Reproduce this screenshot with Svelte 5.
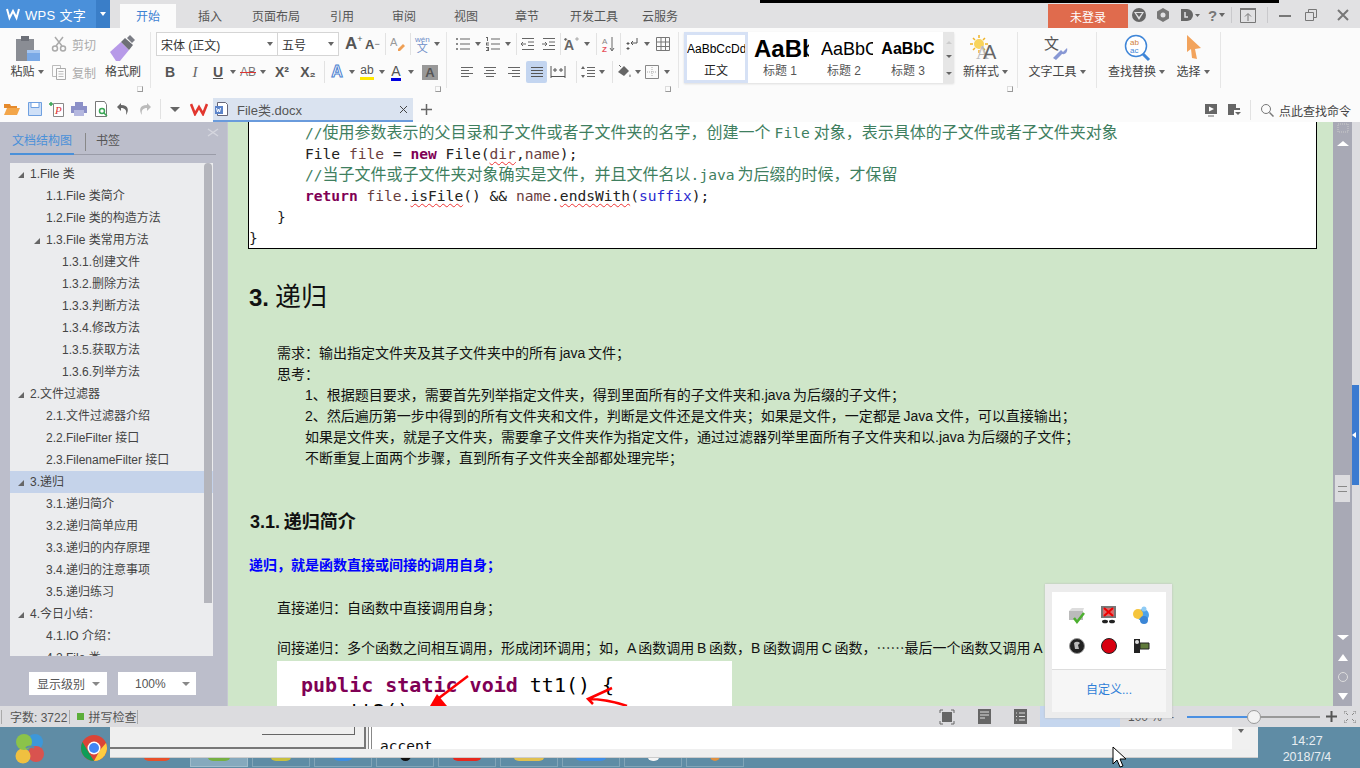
<script>
const tabs = [["开始",56],["插入",68],["页面布局",64],["引用",68],["审阅",56],["视图",68],["章节",54],["开发工具",80],["云服务",52]];
const ic = {
 list:'<g fill="#666"><circle cx="2" cy="3" r="1"/><circle cx="2" cy="8" r="1"/><circle cx="2" cy="13" r="1"/><path d="M5 2.500h10v1H5zM5 7.500h10v1H5zM5 12.500h10v1H5z"/></g>',
 num:'<g fill="#666"><path d="M1 1h2v4H2V2H1zM1 6.500h3v1H2v1h2v1H1zM1 11h3v4H1v-1h2v-.5H2v-1h1V12H1z" /><path d="M6 2.500h9v1H6zM6 7.500h9v1H6zM6 12.500h9v1H6z"/></g>',
 ind1:'<path d="M2 2.500h12M8 6h6M8 9.500h6M2 13.500h12M6 8H1M3 6 1 8l2 2" fill="none" stroke="#666"/>',
 ind2:'<path d="M2 2.500h12M8 6h6M8 9.500h6M2 13.500h12M1 8h5M4 6l2 2-2 2" fill="none" stroke="#666"/>',
 az:'<text x="3" y="7.500" font-size="8" fill="#888" font-family="Liberation Sans">A</text><text x="3" y="15.500" font-size="8" fill="#e8505b" font-weight="700" font-family="Liberation Sans">Z</text><path d="M13 1v13M11 12l2 3 2-3" fill="none" stroke="#666"/>',
 ret:'<path d="M12 2v5H6M8 5 6 7l2 2" fill="none" stroke="#555"/><path d="M3 6v3M1.500 7.500h3M3 11v3M1.500 12.500h3" stroke="#555"/>',
 table:'<path d="M1.500 1.500h13v13h-13zM1.500 6h13M1.500 10.500h13M6 1.500v13M10.500 1.500v13" fill="none" stroke="#777"/>',
 left:'<path d="M2 3.500h12M2 6.500h8M2 9.500h12M2 12.500h8" stroke="#666"/>',
 center:'<path d="M2 3.500h12M4 6.500h8M2 9.500h12M4 12.500h8" stroke="#666"/>',
 right:'<path d="M2 3.500h12M6 6.500h8M2 9.500h12M6 12.500h8" stroke="#666"/>',
 just:'<path d="M2 3.500h12M2 6.500h12M2 9.500h12M2 12.500h12" stroke="#555"/>',
 dist:'<path d="M1 2v12M15 2v12M1 12.500h14M3 6h4M9 6h4M5 4v4M11 4v4" stroke="#555" fill="none"/>',
 lh:'<path d="M7 3.500h8M7 6.500h8M7 9.500h8M7 12.500h8" stroke="#666"/><path d="M3 2 1 5h4zM3 14 1 11h4z" fill="#666"/>',
 fill:'<path d="M2 8 8 2l5 5-5 5z" fill="#666"/><path d="M5 3 3 1" stroke="#666"/><path d="M14 10c1 2 1 3 0 3s-1-1 0-3z" fill="#777"/>',
 border:'<path d="M1.500 1.500h13v13h-13z" fill="none" stroke="#888"/><path d="M8 3v10M3 8h10" stroke="#aaa" stroke-dasharray="1 1"/>',
 aplus:'<text x="0" y="14" font-size="14" fill="#666" font-weight="700" font-family="Liberation Sans">A</text><path d="M11 3h4M13 1v4M1 3l.6-1 .6 1 1 .4-1 .4-.6 1-.6-1-1-.4z" stroke="#666" fill="#666" stroke-width=".5"/>'
};
const fontRow = [{t:"B",w:24,c:"bb"},{t:"I",w:26,c:"ii"},{t:"U",w:20,c:"uu"},{k:"c",w:10},{t:"AB",w:20,c:"ab"},{k:"c",w:10},{t:"X²",w:28,c:"xx"},{t:"X₂",w:24,c:"xx"},{k:"s",w:8},{t:"A",w:18,c:"ao"},{k:"c",w:12},{t:"ab",w:18,c:"hi"},{k:"c",w:12},{t:"A",w:16,c:"fc"},{k:"c",w:14},{t:"A",w:24,c:"fb"}];
const para1 = [{i:"list",w:16},{k:"c",w:14},{i:"num",w:16},{k:"c",w:14},{k:"s",w:2},{i:"ind1",w:22},{i:"ind2",w:20},{k:"s",w:2},{i:"aplus",w:21},{k:"c",w:10},{k:"s",w:8},{i:"az",w:14},{k:"s",w:12},{i:"ret",w:14},{k:"c",w:14},{i:"table",w:18}];
const para2 = [{i:"left",w:23},{i:"center",w:24},{i:"right",w:24},{i:"just",w:21,on:true},{i:"dist",w:22},{k:"s",w:14},{i:"lh",w:10},{k:"c",w:18},{k:"s",w:2},{i:"fill",w:22},{k:"c",w:5},{i:"border",w:24},{k:"c",w:6}];
const tree = [
 [1,"1.File 类",1],[2,"1.1.File 类简介"],[2,"1.2.File 类的构造方法"],[2,"1.3.File 类常用方法",1],
 [3,"1.3.1.创建文件"],[3,"1.3.2.删除方法"],[3,"1.3.3.判断方法"],[3,"1.3.4.修改方法"],[3,"1.3.5.获取方法"],[3,"1.3.6.列举方法"],
 [1,"2.文件过滤器",1],[2,"2.1.文件过滤器介绍"],[2,"2.2.FileFilter 接口"],[2,"2.3.FilenameFilter 接口"],
 [1,"3.递归",1,1],[2,"3.1.递归简介"],[2,"3.2.递归简单应用"],[2,"3.3.递归的内存原理"],[2,"3.4.递归的注意事项"],[2,"3.5.递归练习"],
 [1,"4.今日小结：",1],[2,"4.1.IO 介绍："],[2,"4.2.File 类"]
];
const taskTiles = [["#e8502a",28,0],["#76b043",24,1],["#c8c040",22,0],["#3f8ee0",20,0],["#111",11,0],["#e6281e",30,0],["#e0c050",32,0],["#3f8ee6",32,0],["#f4f4f4",13,0],["#e09040",10,0]];
</script>

<div class="page">
 <header class="title">
  <div class="logo">
   <svg width="14" height="14" viewBox="0 0 14 14"><path d="M1 2l2.500 9L7 4l3.500 7L13 2" fill="none" stroke="#fff" stroke-width="2"/></svg>
   <span class="wps">WPS 文字</span>
   <span class="logocaret"><i class="caret white"></i></span>
  </div>
  <div class="spacer10"></div>
  <nav class="tabs">
   {#each tabs as t, n}<span class="tab" class:active={n===0} style="width:{t[1]}px">{t[0]}</span>{/each}
  </nav>
  <div class="blackline"></div>
  <button class="login">未登录</button>
  <div class="winbtns">
   <svg width="16" height="16" viewBox="0 0 16 16"><circle cx="8" cy="8" r="7" fill="#666"/><path d="M3 5h10L8 13z" fill="#e1e1e3"/><path d="M5 6h6L8 10z" fill="#666"/></svg>
   <svg class="m8" width="16" height="16" viewBox="0 0 16 16"><path d="M8 1l6 3.500v7L8 15l-6-3.500v-7z" fill="#777"/><circle cx="8" cy="8" r="2.500" fill="#e1e1e3"/></svg>
   <svg class="m8" width="22" height="16" viewBox="0 0 22 16"><path d="M2 2h6a6 6 0 0 1 0 12H2z" fill="#666"/><path d="M6 5v5h3" stroke="#e1e1e3" stroke-width="1.500" fill="none"/><path d="M16 7h5l-2.500 3z" fill="#666"/></svg>
   <span class="q">?</span><i class="caret"></i>
   <i class="tsep s1"></i>
   <svg class="m8" width="16" height="16" viewBox="0 0 16 16"><path d="M.5 2.500h15v13H.5z" fill="none" stroke="#777"/><path d="M0 1h16v2H0z" fill="#777"/><path d="M8 14V7M5 9.500 8 6.500l3 3" fill="none" stroke="#777"/></svg>
   <i class="tsep s2"></i>
   <svg class="m10" width="14" height="14" viewBox="0 0 14 14"><path d="M1 8h12" stroke="#777" stroke-width="2"/></svg>
   <svg class="m12" width="14" height="14" viewBox="0 0 14 14"><path d="M1.500 4.500h8v8h-8zM4.500 4V1.500h8v8H10" fill="none" stroke="#777"/></svg>
   <svg class="m18" width="14" height="14" viewBox="0 0 14 14"><path d="M2 2l10 10M12 2 2 12" stroke="#777" stroke-width="2"/></svg>
  </div>
 </header>

 <section class="ribbon">
  <div class="g g1">
   <div class="big paste">
    <svg width="28" height="28" viewBox="0 0 28 28"><path d="M3 5h18v22H3z" fill="#8a8d94"/><path d="M8 2h8v5H8z" fill="#6d7078"/><path d="M14 16h13v11H14z" fill="#7aa9e6"/><path d="M14 16h13v3H14z" fill="#a5c5ef"/></svg>
    <span class="lab">粘贴<i class="caret"></i></span>
   </div>
   <div class="mid">
    <div class="mi dim"><svg width="16" height="16" viewBox="0 0 16 16"><path d="M4 1l7 9M12 1 5 10" stroke="#aaa" stroke-width="1.500"/><circle cx="4" cy="12.500" r="2.500" fill="none" stroke="#aaa" stroke-width="1.500"/><circle cx="12" cy="12.500" r="2.500" fill="none" stroke="#aaa" stroke-width="1.500"/></svg>剪切</div>
    <div class="mi dim"><svg width="16" height="16" viewBox="0 0 16 16"><path d="M1.500 1.500h8v11h-8z" fill="none" stroke="#bbb"/><path d="M5.500 4.500h9v11h-9z" fill="#fbfbfb" stroke="#aaa"/><path d="M7.500 7.500h5M7.500 10h5M7.500 12.500h5" stroke="#bbb"/></svg>复制</div>
   </div>
   <div class="big brush">
    <svg width="28" height="28" viewBox="0 0 28 28"><path d="M1 18 12 8l8 8-9 11H7z" fill="#b79ae8"/><path d="M12 8l4-4 8 7-4 5z" fill="#6d6f76"/><path d="M18 4l3-3 5 5-3 3z" fill="#7b7d85"/></svg>
    <span class="lab">格式刷</span>
   </div>
   <i class="launch l1"></i>
  </div>
  <i class="rsep"></i>
  <div class="g g2">
   <div class="r r1">
    <div class="sel font"><span>宋体 (正文)</span><i class="caret"></i></div>
    <div class="sel size"><span>五号</span><i class="caret"></i></div>
    <span class="fa big1">A<sup>+</sup></span>
    <span class="fa small1">A<sup>−</sup></span>
    <i class="vs"></i>
    <svg class="clear" width="16" height="16" viewBox="0 0 16 16"><text x="0" y="10" font-size="11" fill="#999" font-family="Liberation Sans">A</text><path d="M8 13l5-5 2 2-5 5H8z" fill="#ef9f55"/></svg>
    <i class="vs"></i>
    <span class="wen"><small>wén</small><b>文</b></span><i class="caret"></i>
   </div>
   <div class="r tools">
    {#each fontRow as t}
     <span class="tc" style="width:{t.w}px">
      {#if t.k==="c"}<i class="caret"></i>{:else if t.k==="s"}<i class="vs"></i>{:else}<span class={t.c}>{t.t}</span>{/if}
     </span>
    {/each}
   </div>
   <i class="launch l2"></i>
  </div>
  <i class="rsep"></i>
  <div class="g g3">
   {#each [para1,para2] as row}
   <div class="r tools">
    {#each row as t}
     <span class="tc" class:on={t.on} style="width:{t.w}px">
      {#if t.k==="c"}<i class="caret"></i>{:else if t.k==="s"}<i class="vs"></i>{:else}<svg class="ti" width="16" height="16" viewBox="0 0 16 16">{@html ic[t.i]}</svg>{/if}
     </span>
    {/each}
   </div>
   {/each}
   <i class="launch l3"></i>
  </div>
  <i class="rsep"></i>
  <div class="gallery">
   <div class="st first"><span class="s0">AaBbCcDd</span><em class="k">正文</em></div>
   <div class="st"><span class="s1">AaBb</span><em>标题 1</em></div>
   <div class="st"><span class="s2">AaBbC</span><em>标题 2</em></div>
   <div class="st"><span class="s3">AaBbC</span><em>标题 3</em></div>
   <div class="gscroll"><i class="up"></i><i class="dn"></i><i class="dn2"></i></div>
  </div>
  <div class="big b-new">
   <svg width="34" height="26" viewBox="0 0 34 26"><circle cx="10" cy="9" r="5" fill="#f8d45c"/><path d="M10 0v3M10 15v3M1 9h3M16 9h3M4 3l2 2M14 13l2 2M4 15l2-2M14 5l2-2" stroke="#f0b429" stroke-width="1.500"/><text x="7" y="24" font-size="18" fill="#bbb" font-family="Liberation Serif">A</text><text x="14" y="24" font-size="20" fill="#666" font-family="Liberation Sans">A</text></svg>
   <span class="lab">新样式<i class="caret"></i></span>
   <i class="launch l4"></i>
  </div>
  <i class="rsep"></i>
  <div class="big b-tool">
   <svg width="28" height="28" viewBox="0 0 28 28"><text x="1" y="15" font-size="15" fill="#555" font-family="Noto Sans CJK SC">文</text><path d="M10 24l8-8 2 2 4-4c1 3-1 7-5 6l-6 6z" fill="#8898d4"/></svg>
   <span class="lab">文字工具<i class="caret"></i></span>
  </div>
  <i class="rsep"></i>
  <div class="big b-find">
   <svg width="28" height="28" viewBox="0 0 28 28"><circle cx="13" cy="12" r="10.500" fill="#fff" stroke="#3f86d8" stroke-width="1.500"/><path d="M20 20l6 6" stroke="#3f86d8" stroke-width="3"/><text x="7" y="11" font-size="8" fill="#d2813a" font-family="Liberation Sans">ab</text><text x="7" y="19" font-size="8" fill="#3f86d8" font-family="Liberation Sans">ac</text></svg>
   <span class="lab">查找替换<i class="caret"></i></span>
  </div>
  <div class="big b-sel">
   <svg width="28" height="28" viewBox="0 0 28 28"><path d="M8 1l14 13-6 1 2 10-5-1-1-9-4 3z" fill="#f2a35c"/></svg>
   <span class="lab">选择<i class="caret"></i></span>
  </div>
  <i class="rsep"></i>
 </section>

 <section class="quick">
  <svg width="18" height="16" viewBox="0 0 18 16"><path d="M1 3h6l1 2h6v2H1z" fill="#e58a2c"/><path d="M1 14 4 7h13l-3 7z" fill="#f3a64a"/></svg>
  <svg width="16" height="16" viewBox="0 0 16 16"><path d="M1.500 1.500h13v13h-13z" fill="#cfe0f7" stroke="#6fa0e0"/><path d="M4 1.500h8v5H4z" fill="#fff" stroke="#6fa0e0"/></svg>
  <svg width="16" height="16" viewBox="0 0 16 16"><path d="M4.500 2.500h10v13h-10z" fill="#fff" stroke="#888"/><path d="M0 3h4M2 1v4" stroke="#3aa655" stroke-width="1.500"/><text x="6" y="13" font-size="11" fill="#d33" font-style="italic" font-family="Liberation Serif">P</text></svg>
  <svg width="16" height="16" viewBox="0 0 16 16"><path d="M4 1h8v4H4zM0 5h16v7H0z" fill="#8c90c8"/><path d="M3 9h10v6H3z" fill="#b5b8df"/></svg>
  <svg width="16" height="16" viewBox="0 0 16 16"><path d="M2.500.5h9l2 3v12h-11z" fill="#fff" stroke="#777"/><circle cx="9" cy="10" r="2.500" fill="none" stroke="#3aa655" stroke-width="1.500"/><path d="M11 12l3 3" stroke="#3aa655" stroke-width="1.500"/></svg>
  <svg width="16" height="16" viewBox="0 0 16 16"><path d="M6 2 2 6l4 4V7c4 0 6 2 5 7 3-4 3-10-5-10z" fill="#666"/></svg>
  <svg width="16" height="16" viewBox="0 0 16 16"><path d="M10 2l4 4-4 4V7C6 7 4 9 5 14 2 10 2 4 10 4z" fill="#bbb"/></svg>
  <i class="vs tall"></i>
  <i class="caret wide"></i>
  <svg class="wlogo" width="18" height="14" viewBox="0 0 18 14"><path d="M1 2l4 10 4-7 4 7 4-10" fill="none" stroke="#e2372f" stroke-width="2.600"/></svg>
  <div class="doctab">
   <svg width="16" height="16" viewBox="0 0 16 16"><path d="M3.500 1.500h8l2 2v11h-10z" fill="#fff" stroke="#667"/><path d="M1 5h8v8H1z" fill="#5b83c9"/><path d="M2.500 7l1 4 1-3 1 3 1-4" stroke="#fff" fill="none"/></svg>
   <span class="dn">File类.docx</span>
   <svg class="x" width="9" height="9" viewBox="0 0 9 9"><path d="M1 1l7 7M8 1 1 8" stroke="#444"/></svg>
  </div>
  <svg class="plus" width="13" height="13" viewBox="0 0 13 13"><path d="M6.500 1v11M1 6.500h11" stroke="#666" stroke-width="1.500"/></svg>
  <div class="qright">
   <svg width="14" height="14" viewBox="0 0 14 14"><path d="M1 1h12v10H1z" fill="#666"/><path d="M5 3.500 10 6 5 8.500z" fill="#fff"/><path d="M4 13h6" stroke="#666"/></svg>
   <svg width="14" height="14" viewBox="0 0 14 14"><path d="M1 1h8v4h4v2H7v5H1z" fill="#666"/><path d="M8 9h6l-3 3z" fill="#666"/></svg>
   <i class="vs tall"></i>
   <svg width="14" height="14" viewBox="0 0 14 14"><circle cx="6" cy="6" r="4.500" fill="none" stroke="#777"/><path d="M9.500 9.500l4 4" stroke="#777" stroke-width="1.500"/></svg>
   <span class="cmd">点此查找命令</span>
  </div>
 </section>

 <main class="main">
  <aside class="side">
   <div class="sidetabs">
    <span class="st-on">文档结构图</span><i class="stsep"></i><span class="st-off">书签</span>
    <svg class="sx" width="12" height="9" viewBox="0 0 12 9"><path d="M1 1l10 7M11 1 1 8" stroke="#d5d6de" stroke-width="1.500"/></svg>
   </div>
   <div class="tree">
    <div class="rows">
    {#each tree as t}
     <div class="row lv{t[0]}" class:sel-row={t[3]}>
      {#if t[2]}<i class="tri"></i>{/if}<span>{t[1]}</span>
     </div>
    {/each}
    </div>
    <i class="tscroll"></i>
   </div>
   <div class="sidesel">
    <div class="ss a"><span>显示级别</span><i class="caret big-c"></i></div>
    <div class="ss b"><span>100%</span><i class="caret big-c"></i></div>
   </div>
  </aside>
  <article class="doc">
   <div class="code">
    <div class="cl i2"><span class="cm">//<span class="z">使用参数表示的父目录和子文件或者子文件夹的名字，创建一个</span><span class="gap">File</span><span class="z">对象，表示具体的子文件或者子文件夹对象</span></span></div>
    <div class="cl i2">File <span class="v">file</span> = <b class="kw">new</b> File(<span class="v wv">dir</span>,<span class="v">name</span>);</div>
    <div class="cl i2"><span class="cm">//<span class="z">当子文件或子文件夹对象确实是文件，并且文件名以</span>.java<span class="z after">为后缀的时候，才保留</span></span></div>
    <div class="cl i2"><b class="kw">return</b> <span class="v">file</span>.<span class="wv">isFile</span>() &amp;&amp; <span class="v">name</span>.<span class="wv">endsWith</span>(<span class="p">suffix</span>);</div>
    <div class="cl i1">&#125;</div>
    <div class="cl">&#125;</div>
   </div>
   <h1><b>3.</b> 递归</h1>
   <div class="paras">
    <p>需求：输出指定文件夹及其子文件夹中的所有 java 文件；</p>
    <p>思考：</p>
    <p class="in">1、根据题目要求，需要首先列举指定文件夹，得到里面所有的子文件夹和.java 为后缀的子文件；</p>
    <p class="in">2、然后遍历第一步中得到的所有文件夹和文件，判断是文件还是文件夹；如果是文件，一定都是 Java 文件，可以直接输出；</p>
    <p class="in">如果是文件夹，就是子文件夹，需要拿子文件夹作为指定文件，通过过滤器列举里面所有子文件夹和以.java 为后缀的子文件；</p>
    <p class="in">不断重复上面两个步骤，直到所有子文件夹全部都处理完毕；</p>
   </div>
   <h2>3.1. 递归简介</h2>
   <p class="blue">递归，就是函数直接或间接的调用自身；</p>
   <p class="plain m1">直接递归：自函数中直接调用自身；</p>
   <p class="plain m2">间接递归：多个函数之间相互调用，形成闭环调用；如，A 函数调用 B 函数，B 函数调用 C 函数，⋯⋯最后一个函数又调用 A</p>
   <div class="shot">
    <div class="sl"><b class="pk">public static</b> <b class="pk">void</b> tt1() &#123;</div>
    <div class="sl s2l">tt2();</div>
    <svg class="arrows" width="455" height="45" viewBox="0 0 455 45"><path d="M191 15 162 37" stroke="#f00" stroke-width="2.500" fill="none"/><path d="M153 45 160 33 170 45z" fill="#f00"/><path d="M335 27 311 38 316 43M311 38Q330 38 350 45" stroke="#f00" stroke-width="2.500" fill="none"/></svg>
   </div>
  </article>
  <div class="vscroll">
   <svg class="vs0" width="12" height="10" viewBox="0 0 12 10"><path d="M1 1h10v8H1z" fill="none" stroke="#ccc" stroke-dasharray="1 1"/></svg>
   <i class="tu"></i>
   <div class="vthumbwrap"><div class="vthumb"><i></i><i></i></div></div>
   <i class="td"></i>
   <i class="tu dbl"></i>
   <i class="ring"></i>
   <i class="td dbl"></i>
  </div>
  <div class="vstrip"><div class="vblue"><i></i></div></div>
 </main>

 <footer class="status">
  <i class="bar"></i><span class="count">字数: 3722</span><i class="bar"></i>
  <i class="gsq"></i><span>拼写检查</span><i class="bar"></i>
  <div class="sright">
   <svg width="16" height="16" viewBox="0 0 16 16"><path d="M3 3h10v10H3z" fill="#666"/><path d="M1 4V1h3M12 1h3v3M15 12v3h-3M4 15H1v-3" fill="none" stroke="#666"/></svg>
   <svg width="13" height="15" viewBox="0 0 13 15"><path d="M0 0h13v15H0z" fill="#666"/><path d="M2 3h9M2 6h9M2 9h5" stroke="#ddd"/></svg>
   <svg width="13" height="15" viewBox="0 0 13 15"><path d="M0 0h13v15H0z" fill="#666"/><path d="M2 4h1M5 4h6M2 7.500h1M5 7.500h6M2 11h1M5 11h6" stroke="#ddd"/></svg>
   <div class="hl"></div>
   <span class="zoomtxt">100 %</span>
   <i class="zm">-</i>
   <div class="slider"><i class="fillb"></i><i class="knob"></i></div>
   <svg width="11" height="11" viewBox="0 0 11 11"><path d="M5.500 0v11M0 5.500h11" stroke="#555" stroke-width="2"/></svg>
   <svg width="12" height="12" viewBox="0 0 12 12"><path d="M0 3V0h3M9 0h3v3M12 9v3H9M3 12H0V9M2 2l2 2M10 2 8 4M10 10 8 8M2 10l2-2" fill="none" stroke="#888"/></svg>
  </div>
 </footer>

 <footer class="task">
  <svg class="startlogo" width="32" height="32" viewBox="0 0 32 32"><circle cx="21" cy="10" r="8" fill="#3d97d9"/><circle cx="22" cy="22" r="8" fill="#d9534f"/><circle cx="9" cy="24" r="7.500" fill="#f0c040"/><circle cx="10" cy="10" r="8" fill="#8bc34a"/><path d="M12 16c2-2 6-2 8 0" stroke="#5f8ca5" stroke-width="2" fill="none"/></svg>
  <svg class="chrome" width="26" height="26" viewBox="0 0 26 26"><circle cx="13" cy="13" r="13" fill="#db4437"/><path d="M13 26A13 13 0 0 1 1.500 7L8 18z" fill="#0f9d58"/><path d="M13 26 19 15 25 8a13 13 0 0 1-12 18z" fill="#ffcd40"/><circle cx="13" cy="13" r="6.500" fill="#fff"/><circle cx="13" cy="13" r="5" fill="#4285f4"/></svg>
  <div class="peek">
   {#each taskTiles as t}
    <div class="tile" class:lit={t[2]}><i style="background:{t[0]};width:{t[1]}px"></i></div>
   {/each}
  </div>
  <div class="clock"><span>14:27</span><span>2018/7/4</span></div>
 </footer>

 <div class="overwin">
  <div class="ow-left"><div class="ow-btn"></div></div>
  <div class="ow-right"><span class="accept">accept</span><div class="ow-end"><i class="caret"></i></div></div>
 </div>
 <svg class="cursor" width="16" height="22" viewBox="0 0 16 22"><path d="M1 1v17l4-4 3 7 3-1-3-7h6z" fill="#fff" stroke="#000"/></svg>

 <div class="tray">
  <div class="trayin">
   <div class="trayicons">
    <svg width="20" height="20" viewBox="0 0 20 20"><path d="M2 6h14v9H2z" fill="#bbb"/><path d="M2 6l3-3h12l-1 3z" fill="#ddd"/><path d="M7 13l3 4 7-9" fill="none" stroke="#4caf2f" stroke-width="2.500"/></svg>
    <svg width="20" height="20" viewBox="0 0 20 20"><path d="M2 1h15v12H2z" fill="#777"/><path d="M4 3h11v8H4z" fill="#d96a6a"/><path d="M5 3l9 8M14 3l-9 8" stroke="#e00" stroke-width="2"/><ellipse cx="6" cy="16.500" rx="3" ry="1.800" fill="#222"/><ellipse cx="13" cy="16.500" rx="3" ry="1.800" fill="#222"/></svg>
    <svg width="20" height="20" viewBox="0 0 20 20"><circle cx="12" cy="10" r="6" fill="#4fa3e8"/><circle cx="7" cy="9" r="5" fill="#f5c53d"/><circle cx="13" cy="15" r="4" fill="#3b86d6"/><circle cx="13" cy="4" r="2.500" fill="#8ecbf5"/></svg>
    <svg width="20" height="20" viewBox="0 0 20 20"><circle cx="10" cy="10" r="7.500" fill="#222"/><circle cx="10" cy="10" r="7.500" fill="none" stroke="#999"/><path d="M7 7a4 4 0 0 1 6 0l-2 2 1 4-4 0z" fill="#bbb"/></svg>
    <svg width="20" height="20" viewBox="0 0 20 20"><circle cx="10" cy="10" r="7.500" fill="#d80010" stroke="#222"/></svg>
    <svg width="20" height="20" viewBox="0 0 20 20"><path d="M3 3h6v14H3z" fill="#222"/><circle cx="6" cy="6" r="2" fill="#ddd"/><path d="M9 7h9v6H9z" fill="#5f7a3a" stroke="#222"/></svg>
   </div>
   <div class="custom">自定义...</div>
  </div>
 </div>
</div>

<style>
:global(body){margin:0;background:#dcdcdf}
.page{position:relative;width:1360px;height:768px;overflow:hidden;display:flex;flex-direction:column;font-family:"Liberation Sans","Noto Sans CJK SC",sans-serif;font-size:12px;color:#444}
i{display:block;font-style:normal}
.caret{width:0;height:0;border:3px solid transparent;border-top:4px solid #666;border-bottom:0;flex:none}
.caret.white{border-top-color:#fff}
.vs{width:1px;height:22px;background:#e2e2e2;flex:none}

.title{position:relative;height:28px;flex:none;background:#e1e1e3;display:flex;align-items:flex-end}
.logo{width:110px;height:28px;background:#4a90da;display:flex;align-items:center;padding-left:6px;box-sizing:border-box;color:#fff;gap:5px}
.wps{font-size:13px;letter-spacing:.3px}
.logocaret{margin-left:auto;width:14px;height:28px;background:#3a7ec8;display:flex;align-items:center;justify-content:center}
.spacer10{width:10px}
.tabs{display:flex;align-items:flex-end}
.tab{height:24px;line-height:26px;text-align:center;flex:none;white-space:nowrap;color:#555}
.tab.active{background:#fbfbfb;color:#3d82d3}
.blackline{position:absolute;left:760px;top:0;width:519px;height:3px;background:#000}
.login{position:absolute;left:1048px;top:4px;width:80px;height:24px;background:#e06b4d;color:#fff;border:0;padding:0;font:inherit;font-size:12px}
.winbtns{position:absolute;left:1131px;top:6px;height:18px;display:flex;align-items:center}
.winbtns svg{flex:none}
.m8{margin-left:8px}.m10{margin-left:10px}.m12{margin-left:12px}.m18{margin-left:18px}
.q{font-size:15px;font-weight:700;color:#777;margin:0 2px 0 7px;width:9px}
.tsep{width:1px;height:16px;background:#c9c9cc}
.s1{margin-left:6px}.s2{margin-left:11px}

.ribbon{height:68px;flex:none;background:#fbfbfb;display:flex;position:relative}
.rsep{width:1px;height:56px;margin-top:4px;background:#e6e6e6;flex:none}
.g{position:relative;flex:none;height:68px;box-sizing:border-box}
.g1{width:150px;display:flex}
.big{display:flex;flex-direction:column;align-items:center;flex:none;position:relative;padding-top:6px;box-sizing:border-box}
.big svg{height:28px;flex:none}
.lab{display:flex;align-items:center;gap:3px;line-height:20px;white-space:nowrap;color:#444}
.paste{width:44px;margin-left:5px}
.mid{width:52px;padding-top:4px;margin-left:2px}
.mi{height:24px;display:flex;align-items:center;gap:5px;color:#aaa}
.mi:last-child{margin-top:4px}
.brush{width:38px;margin-left:1px}
.launch{position:absolute;width:4px;height:4px;border:1px solid #999;border-top-color:#ddd;border-left-color:#ddd}
.l1{left:137px;top:58px}.l2{right:5px;top:58px}.l3{right:7px;top:58px}.l4{right:4px;top:58px}
.g2{width:295px;padding:4px 0 0 5px}
.r{display:flex;align-items:center;height:24px}
.r1{margin-bottom:4px}
.sel{height:24px;box-sizing:border-box;border:1px solid #d5d5d5;background:#fff;display:flex;align-items:center;justify-content:space-between;padding:0 4px;color:#333;flex:none}
.font{width:122px}
.size{width:61px;border-left:0}
.fa{font-weight:700;color:#555;display:flex;flex:none}
.fa sup{font-size:9px;font-weight:400;line-height:10px}
.big1{font-size:17px;margin-left:6px;width:20px}
.small1{font-size:13px;width:16px;align-items:center}
.r1 .vs{margin:0 4px}
.clear{flex:none}
.wen{display:flex;flex-direction:column;align-items:center;line-height:9px;margin-right:4px;color:#6d8dc8}
.wen small{font-size:8px}.wen b{font-weight:400;font-size:11px}
.tools{padding-left:2px}
.tc{height:22px;display:flex;align-items:center;justify-content:center;flex:none;position:relative}
.tc.on{background:#c3d5f0;border-radius:2px}
.ti{flex:none;overflow:visible}
.bb{font-weight:700;font-size:14px;color:#555}
.ii{font-style:italic;font-family:"Liberation Serif",serif;font-size:15px;color:#666}
.uu{font-weight:700;font-size:14px;text-decoration:underline;color:#555}
.ab{font-size:12px;color:#777;text-decoration:line-through;text-decoration-color:#d33}
.xx{font-weight:700;font-size:14px;color:#555}
.ao{font-weight:700;font-size:16px;color:#fff;-webkit-text-stroke:1px #4a80d0}
.hi{font-size:12px;color:#555;border-bottom:3px solid #ffe800;line-height:13px}
.fc{font-size:14px;color:#555;border-bottom:3px solid #0000e0;line-height:14px}
.fb{font-weight:700;font-size:13px;color:#555;background:#999;padding:0 3px;line-height:15px}
.g3{width:231px;padding:4px 0 0 9px}
.g3 .r:first-child{margin-bottom:4px}
.g3 .tools{padding-left:0;margin-left:-1px}
.gallery{flex:none;width:270px;height:51px;margin:4px 0 0 5px;background:#fff;display:flex;box-shadow:0 1px 2px #ddd;position:relative}
.st{width:64px;flex:none;display:flex;flex-direction:column;align-items:center;overflow:hidden;box-sizing:border-box;border:3px solid transparent;color:#555;white-space:nowrap}
.st.first{border-color:#d6e1f5;background:#fff}
.st>span{height:28px;line-height:28px;color:#000;display:block;width:100%;text-align:center;overflow:hidden}
.st em{font-style:normal;line-height:17px;font-size:12px}
.st em.k{color:#222}
.s0{font-size:12px}
.s1{font-size:24px;font-weight:700}
.s2{font-size:18px}
.s3{font-size:16px;font-weight:700}
.gscroll{position:absolute;right:0;top:0;width:11px;height:51px;background:#e6e6e6;display:flex;flex-direction:column;align-items:center;justify-content:space-around}
.gscroll i{border:3px solid transparent;width:0;height:0}
.gscroll .up{border-bottom:3px solid #ccc}
.gscroll .dn,.gscroll .dn2{border-top:3px solid #666}
.b-new{width:63px}
.b-tool{width:78px}
.b-find{width:75px;margin-left:2px}
.b-sel{width:38px;margin-right:8px}

.quick{height:26px;flex:none;background:#fbfbfb;display:flex;align-items:center;gap:6px;padding-left:3px;box-sizing:border-box;position:relative;z-index:2}
.quick>svg{flex:none}
.vs.tall{height:20px;margin:0 0 0 1px}
.caret.wide{border-width:5px 5px 0;border-top-color:#666;margin-left:3px}
.wlogo{margin-left:4px}
.doctab{width:200px;height:24px;margin:2px 0 0 -1px;background:#dae3f0;border-bottom:2px solid #6a9bdc;box-sizing:border-box;display:flex;align-items:center;padding:0 5px 0 1px;gap:7px;flex:none;font-size:13px;color:#555}
.x{margin-left:auto}
.plus{margin-left:1px}
.qright{position:absolute;right:9px;top:4px;display:flex;align-items:center;gap:9px;height:20px}
.qright .vs.tall{margin:0}
.cmd{margin-left:-4px;color:#444}

.main{height:584px;flex:none;display:flex;overflow:hidden}
.side{width:228px;flex:none;background:#bcbecb;box-sizing:border-box;padding:0 14px 0 10px;border-right:1px solid #c6c7d2;display:flex;flex-direction:column}
.sidetabs{height:27px;margin:6px -3px 8px 0;flex:none;display:flex;align-items:flex-end;position:relative;border-bottom:1px solid #9a9ca8;box-sizing:border-box}
.st-on{color:#4a90d9;line-height:24px;width:62px;margin-bottom:-1px;padding-left:2px;border-bottom:2px solid #4a90d9}
.stsep{width:1px;height:18px;background:#888;margin:0 10px 3px 11px}
.st-off{color:#555;line-height:24px;margin-bottom:1px}
.sx{position:absolute;right:-3px;top:0}
.tree{height:493px;background:#ebecee;flex:none;position:relative;overflow:hidden}
.row{height:22px;line-height:22px;position:relative;white-space:nowrap;color:#444;font-size:12px}
.row span{display:block}
.lv1{padding-left:20px}.lv2{padding-left:36px}.lv3{padding-left:52px}
.sel-row{background:#c5d3ea}
.tri{position:absolute;top:9px;width:0;height:0;border-style:solid;border-width:0 0 6px 6px;border-color:transparent transparent #666 transparent}
.lv1 .tri{left:8px}.lv2 .tri{left:24px}
.tscroll{position:absolute;right:1px;top:0;width:8px;height:440px;background:#b4b5bc;border-radius:4px 4px 0 0}
.sidesel{display:flex;gap:11px;margin:16px 0 0 19px}
.ss{height:23px;background:#fff;display:flex;align-items:center;justify-content:space-between;box-sizing:border-box;color:#555;flex:none}
.ss.a{width:78px;padding:0 7px 0 8px}
.ss.b{width:78px;padding:0 6px 0 17px}
.big-c{border-width:4px 4px 0;border-top-color:#888}

.doc{width:1105px;flex:none;background:#cfe6c9;color:#111;font-size:14px;overflow:hidden;font-family:"Liberation Sans","Noto Sans CJK SC",sans-serif;word-spacing:-1.200px}
.code{margin-left:20px;width:1069px;box-sizing:border-box;background:#fff;border:1px solid #000;border-width:0 1px 1px;height:127px;font-family:"DejaVu Sans Mono","Noto Sans CJK SC",monospace;font-size:14.600px;color:#222;word-spacing:0}
.cl{height:21px;line-height:21px;white-space:pre}
.i2{padding-left:56px}.i1{padding-left:28px}
.cm{color:#3f7f5f}
.z{font-size:16px}
.gap{margin:0 4px}
.after{margin-left:3px}
.kw{color:#7f0055}
.v{color:#6a3e3e}
.wv{text-decoration:underline wavy #e33 1px;text-underline-offset:2px}
.p{color:#2a2ad0}
h1{margin:28px 0 0 21px;height:40px;line-height:40px;font-size:26px;font-weight:400;color:#111}
h1 b{font-size:24px}
.paras{margin:26px 0 0 49px}
p{margin:0;height:21px;line-height:21px;white-space:nowrap;font-size:14px;color:#111}
.in{padding-left:28px}
h2{margin:38px 0 0 22px;height:30px;line-height:30px;font-size:18px;font-weight:700;color:#111}
.blue{margin:18px 0 0 21px;color:#0000ff;font-weight:700}
.plain{margin-left:49px}
.m1{margin-top:22px}.m2{margin-top:19px}
.shot{position:relative;margin:2px 0 0 49px;width:455px;height:60px;background:#fff;font-family:"DejaVu Sans Mono",monospace;font-size:20px;color:#000;padding:11px 0 0 24px;box-sizing:border-box;word-spacing:0}
.sl{line-height:26px;white-space:pre}
.pk{color:#7f0055}
.s2l{padding-left:48px}
.arrows{position:absolute;left:0;top:0}

.vscroll{width:19px;flex:none;background:#a8a9b5;display:flex;flex-direction:column;align-items:center}
.vs0{margin-top:1px;flex:none}
.tu,.td{width:0;height:0;border-left:6px solid transparent;border-right:6px solid transparent;flex:none}
.tu{border-bottom:5px solid #fff;margin-top:8px}
.td{border-top:5px solid #fff}
.vthumbwrap{flex:1;position:relative;width:100%;display:flex;justify-content:center;padding-top:329px;box-sizing:border-box}
.vthumb{width:15px;height:27px;background:#dcdcdf;display:flex;flex-direction:column;align-items:center;justify-content:center;gap:4px}
.vthumb i{width:9px;height:1px;background:#888}
.vscroll .dbl{margin:0}
.tu.dbl{margin-top:14px;border-width:0 5px 7px}
.td.dbl{border-width:7px 5px 0;margin:11px 0 6px}
.ring{width:8px;height:8px;border:1px solid #ddd;border-radius:50%;margin-top:11px}
.vstrip{width:7px;flex:none;background:#dcdce0;padding-top:263px}
.vblue{height:100px;background:#3b7bd0;display:flex;align-items:center}
.vblue i{width:0;height:0;border:3px solid transparent;border-right:4px solid #fff;border-left:0}

.status{height:21px;flex:none;background:#dcdcdf;display:flex;align-items:center;position:relative;color:#555;gap:0}
.bar{width:1px;height:14px;background:#aaa;margin:0 3px 0 1px}
.count{margin:0 1px 0 5px}
.gsq{width:7px;height:7px;background:#5cae3a;margin:0 4px}
.sright{position:absolute;left:939px;top:0;right:0;height:21px;display:flex;align-items:center}
.sright svg{flex:none}
.sright svg:nth-child(2){margin-left:23px}
.sright svg:nth-child(3){margin-left:23px}
.hl{width:80px;height:21px;background:#c5d6ee;margin-left:13px;flex:none}
.zoomtxt{width:50px;text-align:center;flex:none}
.zm{width:17px;color:#555;flex:none}
.slider{position:relative;width:133px;height:2px;background:#999;flex:none;margin-right:6px}
.fillb{position:absolute;left:0;top:0;width:66px;height:2px;background:#4a90e2}
.knob{position:absolute;left:60px;top:-6px;width:12px;height:12px;border-radius:50%;background:#f2f2f2;border:1px solid #999}
.sright svg:last-child{margin-left:7px}

.task{height:41px;flex:none;background:#5f8ca5;position:relative;display:flex;align-items:flex-start}
.startlogo{margin:5px 0 0 14px;flex:none}
.chrome{margin:8px 0 0 35px;flex:none}
.peek{position:absolute;left:128px;top:28px;display:flex;gap:4px}
.tile{width:58px;height:12px;box-sizing:border-box;border:1px solid rgba(255,255,255,.22);border-top:0;display:flex;justify-content:center;overflow:hidden}
.tile:first-child{border-color:transparent}
.tile.lit{background:#86a9bd}
.tile i{height:6px;border-radius:0 0 9px 9px}
.clock{position:absolute;left:1260px;top:6px;width:94px;display:flex;flex-direction:column;align-items:center;color:#e8eef2;line-height:16px;font-size:12.500px}

.overwin{position:absolute;left:110px;top:727px;width:1148px;height:30px;display:flex;background:#efefef;box-shadow:0 1px 0 #ccc}
.ow-left{width:256px;height:22px;flex:none;border-bottom:2px solid #777;border-right:2px solid #777;box-sizing:border-box;position:relative}
.ow-btn{position:absolute;left:152px;top:0;width:92px;height:7px;border-bottom:1px solid #666;border-right:1px solid #666}
.ow-right{flex:1;margin:0 8px 0 2px;height:22px;background:#fff;border-left:4px double #888;position:relative;overflow:hidden}
.accept{position:absolute;left:8px;top:11px;font-family:"DejaVu Sans Mono",monospace;font-size:14.500px;color:#111}
.ow-end{position:absolute;right:0;top:0;width:18px;height:22px;background:#f0f0f0;display:flex;justify-content:center;padding-top:2px;box-sizing:border-box}
.cursor{position:absolute;left:1112px;top:746px}

.tray{position:absolute;left:1045px;top:584px;width:127px;height:134px;background:#ececec;box-shadow:0 0 2px #bbb;padding:8px 6px 6px 7px;box-sizing:border-box}
.trayin{background:#fff;height:120px;display:flex;flex-direction:column}
.trayicons{height:78px;display:grid;grid-template-columns:repeat(3,32px);justify-content:center;align-content:center;row-gap:11px;justify-items:center;border-bottom:1px solid #ddd;box-sizing:border-box}
.custom{flex:1;background:#f6f6f6;color:#2f7fd8;text-align:center;line-height:40px}
</style>
